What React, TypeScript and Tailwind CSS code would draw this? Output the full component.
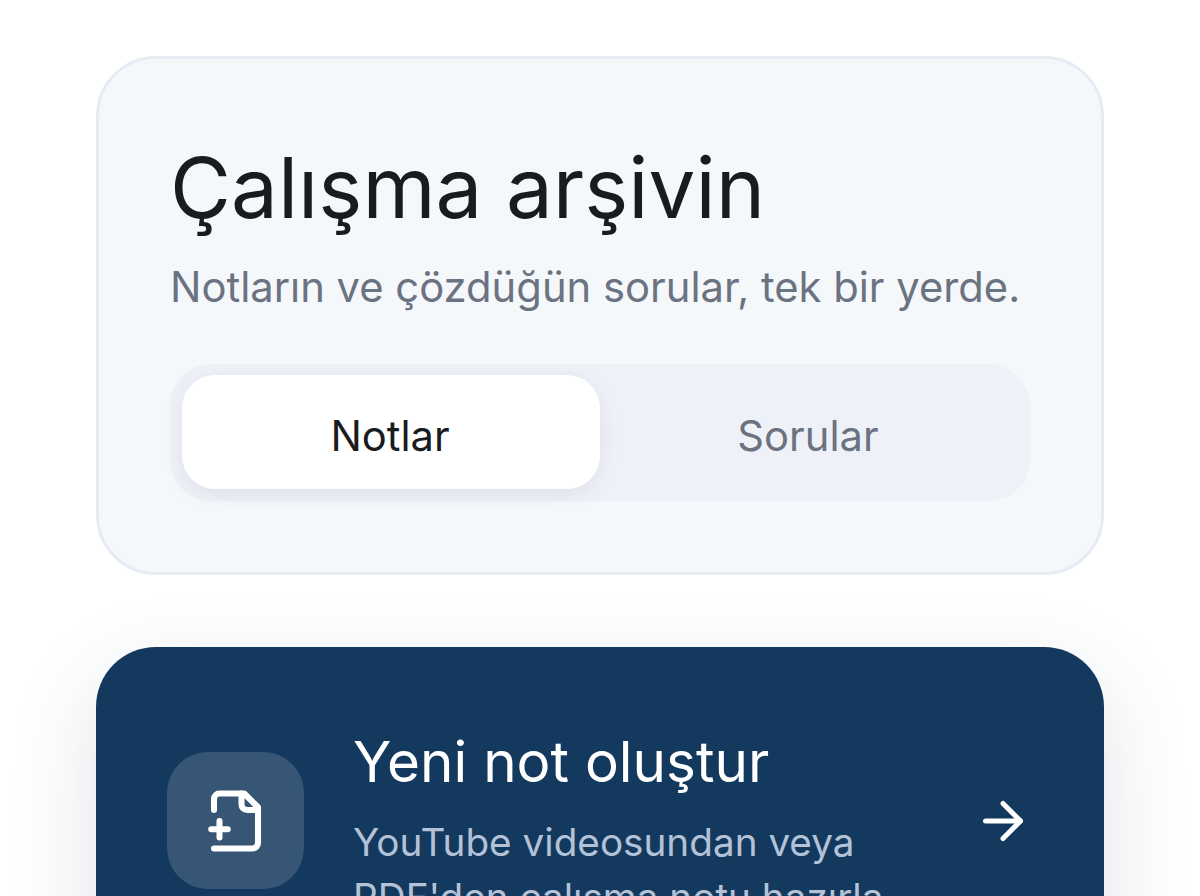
import { ArrowRight } from 'lucide-react';

const font = { fontFamily: 'Inter, "Noto Sans", sans-serif' };

function FilePlusIcon() {
  return (
    <svg width="66" height="66" viewBox="0 0 24 24" fill="none" stroke="#ffffff" strokeWidth="2.2" strokeLinecap="round" strokeLinejoin="round">
      <path d="M4 22h14a2 2 0 0 0 2-2V7l-5-5H6a2 2 0 0 0-2 2v4" />
      <path d="M14 2v4a2 2 0 0 0 2 2h4" />
      <path d="M3 15h6" />
      <path d="M6 12v6" />
    </svg>
  );
}

export default function App() {
  return (
    <div style={font} className="h-[896px] overflow-hidden bg-white px-[96px] pt-[56px]">
      <section className="rounded-[60px] border-[3px] border-[#e6ebf4] bg-[#f4f8fb] px-[71px] pt-[77px] pb-[71px]">
        <h1 className="text-[83.5px] leading-[104px] font-normal text-[#191b1d]">Çalışma arşivin</h1>
        <p className="mt-[16px] text-[41.75px] leading-[62px] text-[#6b7280]">Notların ve çözdüğün sorular, tek bir yerde.</p>
        <div className="mt-[46px] flex h-[137px] rounded-[41px] bg-[#eef1f8] px-[12px] pt-[11px] pb-[12px]">
          <button className="flex-1 rounded-[33px] bg-white pt-[9px] pr-[2px] text-[41.7px] text-[#191b1d] shadow-[0_5px_22px_rgba(0,0,0,0.07)]">Notlar</button>
          <button className="flex-1 rounded-[33px] pt-[9px] pr-[2px] text-[41.7px] text-[#6b7280]">Sorular</button>
        </div>
      </section>
      <section className="mt-[72px] flex items-center rounded-[60px] bg-[#14395f] pl-[71px] pr-[71px] pt-[69px] pb-[72px] shadow-[0_30px_90px_rgba(20,57,95,0.14)]">
        <div className="flex h-[137px] w-[137px] shrink-0 items-center justify-center rounded-[41px] bg-white/15">
          <FilePlusIcon />
        </div>
        <div className="ml-[49px] flex-1 pt-[10px]">
          <h2 className="text-[56.6px] leading-[72px] font-normal text-white">Yeni not oluştur</h2>
          <p className="mt-[17px] text-[38.7px] leading-[55px] text-[#b3c2d6]">
            YouTube videosundan veya
            <br />
            PDF'den çalışma notu hazırla
          </p>
        </div>
        <ArrowRight size={60} strokeWidth={2} color="#ffffff" />
      </section>
    </div>
  );
}
